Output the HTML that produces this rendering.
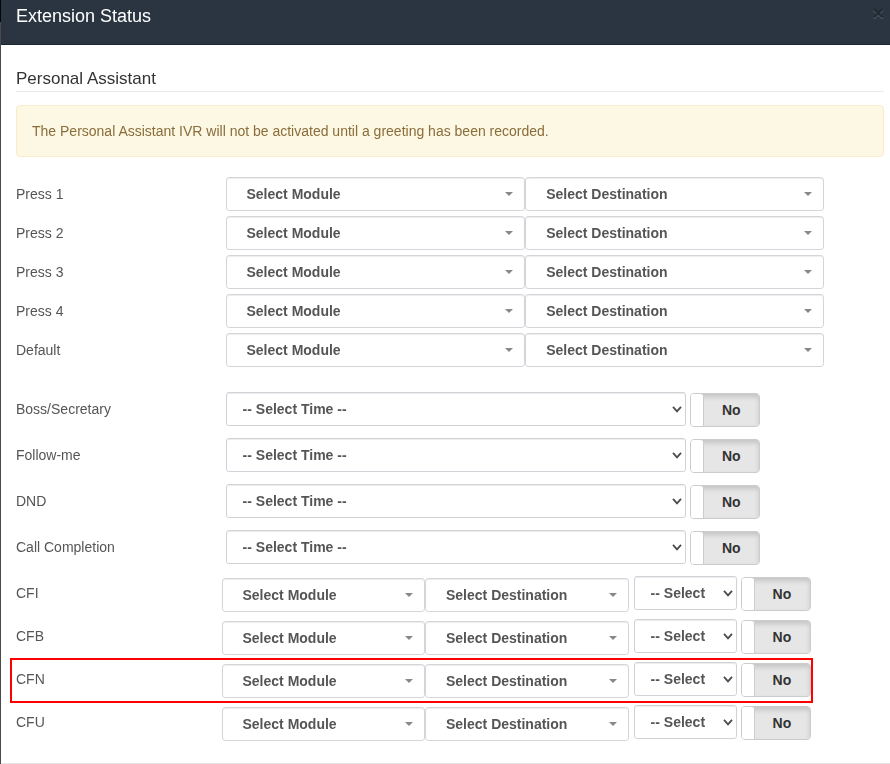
<!DOCTYPE html><html><head><meta charset="utf-8"><title>Extension Status</title><style>
*{box-sizing:border-box;margin:0;padding:0}
html,body{width:890px;height:764px;overflow:hidden;background:#fff}
body{font-family:"Liberation Sans",sans-serif;font-size:14px;color:#555;position:relative}
.a{position:absolute;white-space:nowrap}
#edgeT{left:0;top:0;width:1px;height:22px;background:#050607}
#edgeB{left:0;top:22px;width:1px;height:742px;background:#4a4a4a}
#hdr{left:1px;top:0;width:889px;height:45px;background:#2a3541;border-bottom:1px solid #1c2733}
#ttl{left:16px;top:5px;font-size:18px;line-height:22px;color:#fff}
#cls{left:872px;top:2px;font-size:21px;font-weight:bold;line-height:21px;color:#000;text-shadow:0 1px 0 #fff;opacity:.2}
#leg{left:16px;top:68px;font-size:17px;line-height:22px;color:#333}
#legline{left:16px;top:91px;width:868px;height:1px;background:#e9e9e9}
#alert{left:16px;top:105px;width:868px;height:52px;background:#fcf8e3;border:1px solid #faebcc;border-radius:4px;color:#8a6d3b;padding:0 15px;line-height:50px}
.g{will-change:transform}
.lbl{left:16px;will-change:transform;line-height:20px;color:#555}
.s2{will-change:transform;height:34px;border:1px solid #d4d5d9;border-radius:3.2px;background:#fff;box-shadow:inset 0 1px 1px rgba(0,0,0,.075);font-weight:bold;color:#555;line-height:32px}
.s2 i{position:absolute;top:14px;width:0;height:0;border-left:4px solid transparent;border-right:4px solid transparent;border-top:4px solid #888}
.sel{will-change:transform;height:34px;border:1px solid #d1d2d7;border-radius:2.8px;background:#fff;box-shadow:inset 0 1px 1px rgba(0,0,0,.075);font-weight:bold;color:#555;line-height:32px}
.sel svg{position:absolute;top:12.8px;right:3px;width:10px;height:8px}
.sw{width:70px;height:34px;border:1px solid #ccc;border-radius:4px;background:#fff;overflow:hidden}
.sw b{position:absolute;left:8px;top:0;width:60px;height:32px;background:#e6e6e6;box-shadow:inset 0 3px 5px rgba(0,0,0,.15);color:#333;text-align:center;line-height:33px;font-size:14px;padding-left:4.6px}
.sw u{position:absolute;left:0;top:0;width:13px;height:32px;background:#fff;border-right:1px solid #ccc;border-radius:0 3px 0 0}
#red{left:10px;top:658px;width:803px;height:45px;border:2px solid #ff0000}
#foot{left:1px;top:763px;width:889px;height:1px;background:#e5e5e5}
</style></head><body>
<div class="a" id="hdr"></div><div class="a" id="edgeT"></div><div class="a" id="edgeB"></div>
<div class="a" id="ttl" style="will-change:transform">Extension Status</div>
<div class="a" id="cls">&times;</div>
<div class="a" id="leg" style="will-change:transform">Personal Assistant</div><div class="a" id="legline"></div>
<div class="a" id="alert" style="will-change:transform">The Personal Assistant IVR will not be activated until a greeting has been recorded.</div>
<div class="a lbl" style="top:184px">Press 1</div>
<div class="a s2" style="left:226px;top:177px;width:299px;padding-left:19.5px">Select Module<i style="left:278px"></i></div>
<div class="a s2" style="left:525px;top:177px;width:299px;padding-left:20.2px">Select Destination<i style="left:278px"></i></div>
<div class="a lbl" style="top:223px">Press 2</div>
<div class="a s2" style="left:226px;top:216px;width:299px;padding-left:19.5px">Select Module<i style="left:278px"></i></div>
<div class="a s2" style="left:525px;top:216px;width:299px;padding-left:20.2px">Select Destination<i style="left:278px"></i></div>
<div class="a lbl" style="top:262px">Press 3</div>
<div class="a s2" style="left:226px;top:255px;width:299px;padding-left:19.5px">Select Module<i style="left:278px"></i></div>
<div class="a s2" style="left:525px;top:255px;width:299px;padding-left:20.2px">Select Destination<i style="left:278px"></i></div>
<div class="a lbl" style="top:301px">Press 4</div>
<div class="a s2" style="left:226px;top:294px;width:299px;padding-left:19.5px">Select Module<i style="left:278px"></i></div>
<div class="a s2" style="left:525px;top:294px;width:299px;padding-left:20.2px">Select Destination<i style="left:278px"></i></div>
<div class="a lbl" style="top:340px">Default</div>
<div class="a s2" style="left:226px;top:333px;width:299px;padding-left:19.5px">Select Module<i style="left:278px"></i></div>
<div class="a s2" style="left:525px;top:333px;width:299px;padding-left:20.2px">Select Destination<i style="left:278px"></i></div>
<div class="a lbl" style="top:399px">Boss/Secretary</div>
<div class="a sel" style="left:226px;top:392px;width:460px;padding-left:15.6px">-- Select Time --<svg viewBox="0 0 10 8"><path d="M1 0.9 L5 5.3 L9 0.9" stroke="#4c4c4c" stroke-width="1.8" fill="none"/></svg></div>
<div class="a sw" style="left:690px;top:393px"><b>No</b><u></u></div>
<div class="a lbl" style="top:445px">Follow-me</div>
<div class="a sel" style="left:226px;top:438px;width:460px;padding-left:15.6px">-- Select Time --<svg viewBox="0 0 10 8"><path d="M1 0.9 L5 5.3 L9 0.9" stroke="#4c4c4c" stroke-width="1.8" fill="none"/></svg></div>
<div class="a sw" style="left:690px;top:439px"><b>No</b><u></u></div>
<div class="a lbl" style="top:491px">DND</div>
<div class="a sel" style="left:226px;top:484px;width:460px;padding-left:15.6px">-- Select Time --<svg viewBox="0 0 10 8"><path d="M1 0.9 L5 5.3 L9 0.9" stroke="#4c4c4c" stroke-width="1.8" fill="none"/></svg></div>
<div class="a sw" style="left:690px;top:485px"><b>No</b><u></u></div>
<div class="a lbl" style="top:537px">Call Completion</div>
<div class="a sel" style="left:226px;top:530px;width:460px;padding-left:15.6px">-- Select Time --<svg viewBox="0 0 10 8"><path d="M1 0.9 L5 5.3 L9 0.9" stroke="#4c4c4c" stroke-width="1.8" fill="none"/></svg></div>
<div class="a sw" style="left:690px;top:531px"><b>No</b><u></u></div>
<div class="a lbl" style="top:583px">CFI</div>
<div class="a s2" style="left:222px;top:578px;width:203px;padding-left:19.5px">Select Module<i style="left:182px"></i></div>
<div class="a s2" style="left:425px;top:578px;width:204px;padding-left:20px">Select Destination<i style="left:183px"></i></div>
<div class="a sel" style="left:634px;top:576px;width:103px;padding-left:15.6px">-- Select<svg viewBox="0 0 10 8"><path d="M1 0.9 L5 5.3 L9 0.9" stroke="#4c4c4c" stroke-width="1.8" fill="none"/></svg></div>
<div class="a sw" style="left:741px;top:577px"><b style="padding-left:3.8px">No</b><u></u></div>
<div class="a lbl" style="top:626px">CFB</div>
<div class="a s2" style="left:222px;top:621px;width:203px;padding-left:19.5px">Select Module<i style="left:182px"></i></div>
<div class="a s2" style="left:425px;top:621px;width:204px;padding-left:20px">Select Destination<i style="left:183px"></i></div>
<div class="a sel" style="left:634px;top:619px;width:103px;padding-left:15.6px">-- Select<svg viewBox="0 0 10 8"><path d="M1 0.9 L5 5.3 L9 0.9" stroke="#4c4c4c" stroke-width="1.8" fill="none"/></svg></div>
<div class="a sw" style="left:741px;top:620px"><b style="padding-left:3.8px">No</b><u></u></div>
<div class="a lbl" style="top:669px">CFN</div>
<div class="a s2" style="left:222px;top:664px;width:203px;padding-left:19.5px">Select Module<i style="left:182px"></i></div>
<div class="a s2" style="left:425px;top:664px;width:204px;padding-left:20px">Select Destination<i style="left:183px"></i></div>
<div class="a sel" style="left:634px;top:662px;width:103px;padding-left:15.6px">-- Select<svg viewBox="0 0 10 8"><path d="M1 0.9 L5 5.3 L9 0.9" stroke="#4c4c4c" stroke-width="1.8" fill="none"/></svg></div>
<div class="a sw" style="left:741px;top:663px"><b style="padding-left:3.8px">No</b><u></u></div>
<div class="a lbl" style="top:712px">CFU</div>
<div class="a s2" style="left:222px;top:707px;width:203px;padding-left:19.5px">Select Module<i style="left:182px"></i></div>
<div class="a s2" style="left:425px;top:707px;width:204px;padding-left:20px">Select Destination<i style="left:183px"></i></div>
<div class="a sel" style="left:634px;top:705px;width:103px;padding-left:15.6px">-- Select<svg viewBox="0 0 10 8"><path d="M1 0.9 L5 5.3 L9 0.9" stroke="#4c4c4c" stroke-width="1.8" fill="none"/></svg></div>
<div class="a sw" style="left:741px;top:706px"><b style="padding-left:3.8px">No</b><u></u></div>
<div class="a" id="red"></div><div class="a" id="foot"></div>
</body></html>
